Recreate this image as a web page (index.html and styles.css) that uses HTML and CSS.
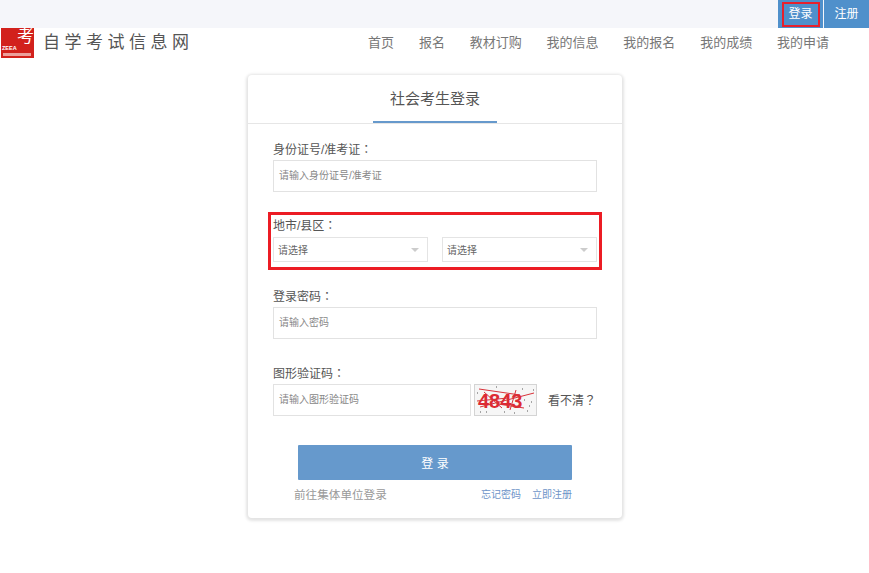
FILE: index.html
```html
<!DOCTYPE html>
<html lang="zh">
<head>
<meta charset="utf-8">
<title>社会考生登录</title>
<link rel="stylesheet" href="styles.css">
</head>
<body>
<div class="topbar">
  <a class="top-btn">登录<span class="mark-top"></span></a>
  <a class="top-btn">注册</a>
</div>
<header class="header">
  <div class="brand">
    <div class="logo"><span class="logo-char">考</span><span class="logo-en">ZEEA</span><span class="logo-sub"></span></div>
    <span class="site-name">自学考试信息网</span>
  </div>
  <nav class="nav">
    <a>首页</a><a>报名</a><a>教材订购</a><a>我的信息</a><a>我的报名</a><a>我的成绩</a><a>我的申请</a>
  </nav>
</header>
<main class="card">
  <div class="card-head"><h1 class="card-title">社会考生登录</h1></div>
  <form class="form">
    <div class="field field-id">
      <label class="label">身份证号/准考证<span class="colon" lang="zh-TW">：</span></label>
      <div class="input">请输入身份证号/准考证</div>
    </div>
    <div class="field field-area">
      <label class="label">地市/县区<span class="colon" lang="zh-TW">：</span></label>
      <div class="selects">
        <div class="select"><span>请选择</span><i class="caret"></i></div>
        <div class="select"><span>请选择</span><i class="caret"></i></div>
      </div>
      <span class="mark-area"></span>
    </div>
    <div class="field field-pwd">
      <label class="label">登录密码<span class="colon" lang="zh-TW">：</span></label>
      <div class="input">请输入密码</div>
    </div>
    <div class="field field-code">
      <label class="label">图形验证码<span class="colon" lang="zh-TW">：</span></label>
      <div class="code-row">
        <div class="input code-input">请输入图形验证码</div>
        <svg class="captcha" width="63" height="32" viewBox="0 0 63 32">
          <rect x="0.5" y="0.5" width="62" height="31" fill="#f6f6f6" stroke="#d4d4d4"/>
          <text x="4" y="24" class="captcha-text">4843</text>
          <path d="M5 5L46 11M6 23L60 9M10 8L28 24M24 20L50 24M42 6L36 26M3 17L34 14" fill="none" stroke="#d8323a" stroke-width="1"/>
          <path d="M3 9h1M12 28h1M48 5h1M57 18h1M53 27h1M22 3h1M40 29h1M59 6h1M6 28h1M30 28h1M55 22h1M50 16h1" stroke="#8a8a8a" stroke-width="1.5"/>
        </svg>
        <span class="code-refresh">看不清<span class="colon" lang="zh-TW">？</span></span>
      </div>
    </div>
    <div class="submit-wrap">
      <button type="button" class="submit">登 录</button>
      <div class="links">
        <a class="link-org">前往集体单位登录</a>
        <span class="links-right"><a>忘记密码</a><a>立即注册</a></span>
      </div>
    </div>
  </form>
</main>
</body>
</html>
```
FILE: styles.css
```css
* { box-sizing: border-box; }
html, body { margin: 0; padding: 0; }
body {
  width: 869px;
  height: 573px;
  overflow: hidden;
  background: #fff;
  color: #555;
  font-family: "Liberation Sans", "Noto Sans CJK SC", sans-serif;
  font-size: 12px;
}
.colon { font-family: "Noto Sans CJK TC", sans-serif; }
.topbar {
  height: 28px;
  background: #f5f6fa;
  display: flex;
  justify-content: flex-end;
  gap: 1px;
}
.top-btn {
  width: 45px;
  height: 28px;
  background: #4f90cb;
  color: #fff;
  font-size: 12px;
  line-height: 28px;
  text-align: center;
  position: relative;
}
.mark-top {
  position: absolute;
  left: 4px;
  top: 2px;
  width: 38px;
  height: 25px;
  border: 2px solid #e8202c;
}
.header {
  height: 30px;
  display: flex;
  justify-content: space-between;
}
.brand { display: flex; align-items: flex-start; }
.logo {
  width: 33px;
  height: 30px;
  margin-left: 1px;
  background: #d2211c;
  position: relative;
  color: #fff;
}
.logo-char {
  position: absolute;
  left: 16px;
  top: 0;
  font-size: 17px;
  line-height: 17px;
}
.logo-en {
  position: absolute;
  left: 1px;
  top: 17px;
  font-size: 5.5px;
  line-height: 6px;
  font-weight: 700;
}
.logo-sub {
  position: absolute;
  left: 2px;
  right: 3px;
  top: 25px;
  height: 3px;
  background: #eba09c;
}
.site-name {
  margin: 4px 0 0 9px;
  font-size: 17px;
  line-height: 22px;
  letter-spacing: 4.5px;
  color: #555;
  white-space: nowrap;
}
.nav {
  display: flex;
  gap: 24.8px;
  padding: 6px 40px 0 0;
  font-size: 13px;
  line-height: 18px;
  color: #777;
}
.card {
  width: 374px;
  height: 443px;
  margin: 17px 0 0 248px;
  background: #fff;
  border-radius: 4px;
  box-shadow: 0 1px 3px 2px rgba(0, 0, 0, 0.11);
}
.card-head {
  height: 49px;
  border-bottom: 1px solid #e6e6e6;
  display: flex;
  justify-content: center;
}
.card-title {
  width: 124px;
  height: 48px;
  margin: 0;
  border-bottom: 2px solid #6699cc;
  font-size: 15px;
  font-weight: 400;
  line-height: 47px;
  text-align: center;
  color: #555;
}
.form { padding: 0 25px; }
.field { position: relative; }
.label {
  display: block;
  height: 18px;
  font-size: 12px;
  line-height: 18px;
  color: #555;
}
.field-id { padding-top: 16px; }
.label + .input { margin-top: 2px; }
.input {
  height: 32px;
  border: 1px solid #e2e2e2;
  padding-left: 5px;
  font-size: 10px;
  line-height: 30px;
  color: #888;
  background: #fff;
}
.field-area { padding-top: 24px; }
.selects {
  display: flex;
  justify-content: space-between;
  margin-top: 3px;
}
.select {
  width: 155px;
  height: 25px;
  border: 1px solid #e4e4e4;
  padding: 0 8px 0 4px;
  display: flex;
  align-items: center;
  justify-content: space-between;
  font-size: 10px;
  color: #666;
}
.caret {
  width: 0;
  height: 0;
  border-left: 4px solid transparent;
  border-right: 4px solid transparent;
  border-top: 4px solid #ccc;
}
.mark-area {
  position: absolute;
  left: -5px;
  right: -5px;
  top: 20px;
  bottom: -8px;
  border: 3px solid #ec1c24;
}
.field-pwd { padding-top: 25px; }
.field-code { padding-top: 25px; }
.code-row { display: flex; align-items: center; margin-top: 2px; }
.code-input { width: 198px; }
.captcha { margin-left: 3px; display: block; }
.captcha-text {
  font-family: "Liberation Sans", sans-serif;
  font-size: 20px;
  font-weight: 700;
  fill: #dd2a33;
}
.code-refresh { margin: 0 0 2px 11px; font-size: 12px; color: #555; }
.submit-wrap { padding: 29px 25px 0; }
.submit {
  display: block;
  width: 274px;
  height: 35px;
  border: 0;
  border-radius: 1px;
  background: #6699cc;
  color: #fff;
  font-family: inherit;
  font-size: 12px;
}
.links {
  display: flex;
  justify-content: space-between;
  margin: 6px 0 0 -4px;
  font-size: 11.6px;
  line-height: 18px;
}
.link-org { color: #999; }
.links-right { display: flex; gap: 11px; font-size: 10px; color: #6d94c8; }
```
